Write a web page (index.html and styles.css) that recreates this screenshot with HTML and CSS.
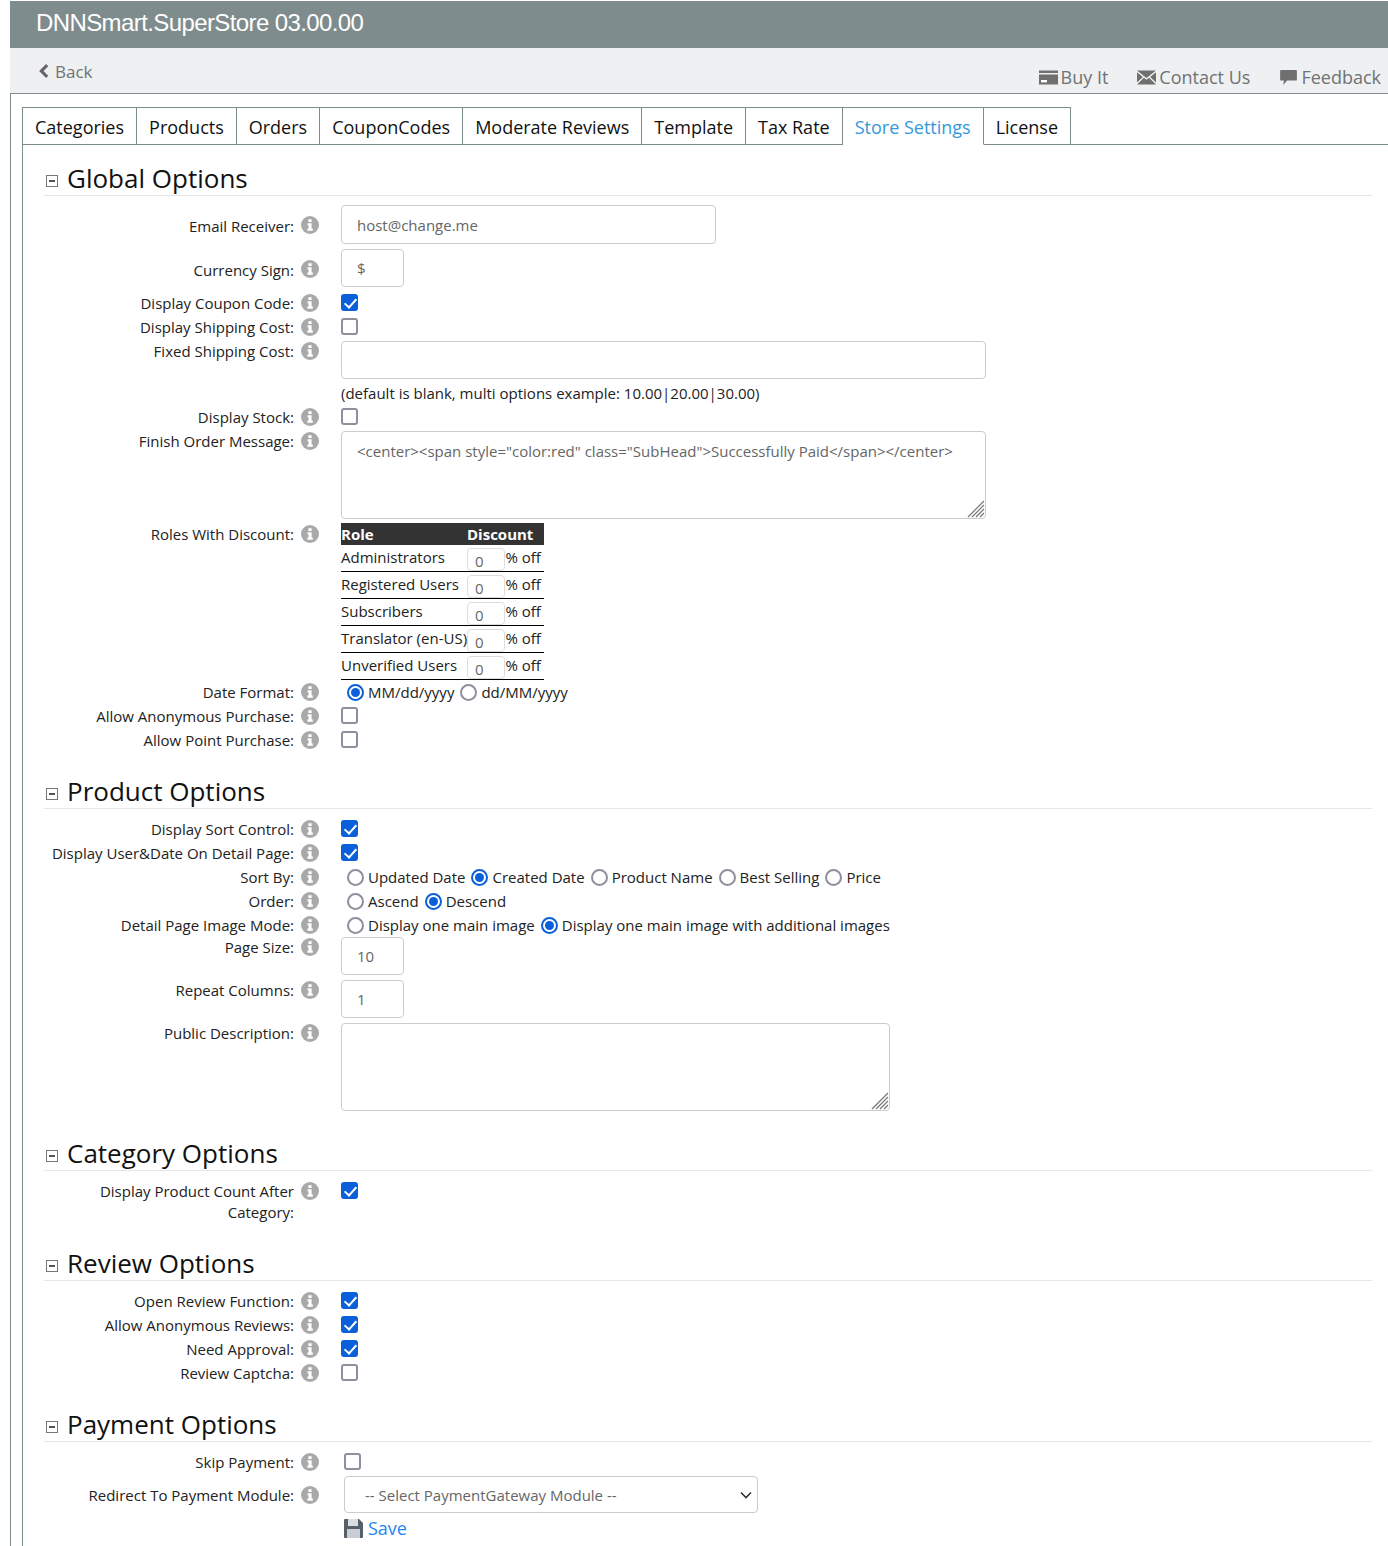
FILE: index.html
```html
<!DOCTYPE html>
<html lang="en">
<head>
<meta charset="utf-8">
<title>DNNSmart.SuperStore</title>
<link rel="stylesheet" href="styles.css">
</head>
<body>
<svg class="defs" width="0" height="0" aria-hidden="true">
  <symbol id="info" viewBox="0 0 18 18">
    <circle cx="9" cy="9" r="9" fill="#a9a9a9"/>
    <path d="M7.4 3.2h3.2v2.8H7.4zM6.6 7.2h4v5.4h1.2v2.2H6.4v-2.2h1.2V9.4h-1z" fill="#fff"/>
  </symbol>
  <symbol id="minus" viewBox="0 0 12 12">
    <rect x=".5" y=".5" width="11" height="11" fill="#fff" stroke="#777"/>
    <rect x="3" y="5" width="6" height="2" fill="#555"/>
  </symbol>
</svg>

<header class="title-bar">DNNSmart.SuperStore 03.00.00</header>
<nav class="sub-bar">
  <a class="back" href="#"><svg class="back-icon" viewBox="0 0 12 16"><path d="M8.6 1 10.8 3.2 6 8l4.8 4.8L8.6 15 1.6 8z" fill="#666"/></svg>Back</a>
  <div class="sub-links">
    <a href="#"><svg class="sub-icon" viewBox="0 0 19 14"><path d="M0 0h19v2.4H0zM0 4h19v10H0z" fill="#6f6f6f"/><rect x="2" y="9.5" width="6" height="2.4" fill="#fff"/></svg>Buy It</a>
    <a href="#"><svg class="sub-icon" viewBox="0 0 19 14"><path d="M0 0h19L9.500 7.500zM0 1.800 5.800 6.400 0 12zM19 1.800 13.200 6.400 19 12zM0 14 6.900 7.300 9.500 9.300 12.100 7.300 19 14z" fill="#6f6f6f"/></svg>Contact Us</a>
    <a href="#"><svg class="sub-icon" viewBox="0 0 19 17"><path d="M1 0h17a1 1 0 0 1 1 1v10a1 1 0 0 1-1 1H8l-4.500 5 .8-5H1a1 1 0 0 1-1-1V1a1 1 0 0 1 1-1z" fill="#6f6f6f"/></svg>Feedback</a>
  </div>
</nav>

<main class="panel">
  <ul class="tabs">
    <li>Categories</li><li>Products</li><li>Orders</li><li>CouponCodes</li><li>Moderate Reviews</li><li>Template</li><li>Tax Rate</li><li class="active">Store Settings</li><li>License</li>
  </ul>
  <div class="tab-body">

    <section class="section first">
      <h2><svg class="collapse"><use href="#minus"/></svg>Global Options</h2>
      <div class="rows">
        <div class="row field"><label class="mid">Email Receiver:</label><svg class="info mid"><use href="#info"/></svg><input class="text w-375" value="host@change.me"></div>
        <div class="row field-s"><label class="mid">Currency Sign:</label><svg class="info mid"><use href="#info"/></svg><input class="text w-63" value="$"></div>
        <div class="row"><label>Display Coupon Code:</label><svg class="info"><use href="#info"/></svg><input type="checkbox" class="check" checked></div>
        <div class="row"><label>Display Shipping Cost:</label><svg class="info"><use href="#info"/></svg><input type="checkbox" class="check"></div>
        <div class="row top-field"><label>Fixed Shipping Cost:</label><svg class="info"><use href="#info"/></svg>
          <div class="stack"><input class="text w-645"><p class="hint">(default is blank, multi options example: 10.00|20.00|30.00)</p></div></div>
        <div class="row"><label>Display Stock:</label><svg class="info"><use href="#info"/></svg><input type="checkbox" class="check"></div>
        <div class="row area-row"><label>Finish Order Message:</label><svg class="info"><use href="#info"/></svg>
          <div class="area w-645"><textarea>&lt;center&gt;&lt;span style="color:red" class="SubHead"&gt;Successfully Paid&lt;/span&gt;&lt;/center&gt;</textarea><svg class="grip" viewBox="0 0 18 18"><path d="M17 1 1 17M17 5 5 17M17 9 9 17M17 13 13 17" stroke="#777" stroke-width="1.200"/></svg></div></div>
        <div class="row roles-row"><label class="roles">Roles With Discount:</label><svg class="info roles"><use href="#info"/></svg>
          <table class="roles-table">
            <thead><tr><th class="c-role">Role</th><th colspan="2">Discount</th></tr></thead>
            <tbody>
              <tr><td>Administrators</td><td class="c-in"><input class="mini" value="0"></td><td class="c-off">% off</td></tr>
              <tr><td>Registered Users</td><td class="c-in"><input class="mini" value="0"></td><td class="c-off">% off</td></tr>
              <tr><td>Subscribers</td><td class="c-in"><input class="mini" value="0"></td><td class="c-off">% off</td></tr>
              <tr><td>Translator (en-US)</td><td class="c-in"><input class="mini" value="0"></td><td class="c-off">% off</td></tr>
              <tr><td>Unverified Users</td><td class="c-in"><input class="mini" value="0"></td><td class="c-off">% off</td></tr>
            </tbody>
          </table></div>
        <div class="row"><label>Date Format:</label><svg class="info"><use href="#info"/></svg>
          <div class="radios"><input type="radio" name="df" checked><span>MM/dd/yyyy</span><input type="radio" name="df"><span>dd/MM/yyyy</span></div></div>
        <div class="row"><label>Allow Anonymous Purchase:</label><svg class="info"><use href="#info"/></svg><input type="checkbox" class="check"></div>
        <div class="row"><label>Allow Point Purchase:</label><svg class="info"><use href="#info"/></svg><input type="checkbox" class="check"></div>
      </div>
    </section>

    <section class="section">
      <h2><svg class="collapse"><use href="#minus"/></svg>Product Options</h2>
      <div class="rows">
        <div class="row"><label>Display Sort Control:</label><svg class="info"><use href="#info"/></svg><input type="checkbox" class="check" checked></div>
        <div class="row"><label>Display User&amp;Date On Detail Page:</label><svg class="info"><use href="#info"/></svg><input type="checkbox" class="check" checked></div>
        <div class="row"><label>Sort By:</label><svg class="info"><use href="#info"/></svg>
          <div class="radios"><input type="radio" name="sb"><span>Updated Date</span><input type="radio" name="sb" checked><span>Created Date</span><input type="radio" name="sb"><span>Product Name</span><input type="radio" name="sb"><span>Best Selling</span><input type="radio" name="sb"><span>Price</span></div></div>
        <div class="row"><label>Order:</label><svg class="info"><use href="#info"/></svg>
          <div class="radios"><input type="radio" name="or"><span>Ascend</span><input type="radio" name="or" checked><span>Descend</span></div></div>
        <div class="row"><label>Detail Page Image Mode:</label><svg class="info"><use href="#info"/></svg>
          <div class="radios"><input type="radio" name="im"><span>Display one main image</span><input type="radio" name="im" checked><span>Display one main image with additional images</span></div></div>
        <div class="row top-field gap-5"><label>Page Size:</label><svg class="info"><use href="#info"/></svg><input class="text w-63" value="10"></div>
        <div class="row top-field gap-5"><label>Repeat Columns:</label><svg class="info"><use href="#info"/></svg><input class="text w-63" value="1"></div>
        <div class="row area-row gap-3"><label>Public Description:</label><svg class="info"><use href="#info"/></svg>
          <div class="area w-549"><textarea></textarea><svg class="grip" viewBox="0 0 18 18"><path d="M17 1 1 17M17 5 5 17M17 9 9 17M17 13 13 17" stroke="#777" stroke-width="1.200"/></svg></div></div>
      </div>
    </section>

    <section class="section">
      <h2><svg class="collapse"><use href="#minus"/></svg>Category Options</h2>
      <div class="rows">
        <div class="row two-line"><label>Display Product Count After Category:</label><svg class="info"><use href="#info"/></svg><input type="checkbox" class="check" checked></div>
      </div>
    </section>

    <section class="section">
      <h2><svg class="collapse"><use href="#minus"/></svg>Review Options</h2>
      <div class="rows">
        <div class="row"><label>Open Review Function:</label><svg class="info"><use href="#info"/></svg><input type="checkbox" class="check" checked></div>
        <div class="row"><label>Allow Anonymous Reviews:</label><svg class="info"><use href="#info"/></svg><input type="checkbox" class="check" checked></div>
        <div class="row"><label>Need Approval:</label><svg class="info"><use href="#info"/></svg><input type="checkbox" class="check" checked></div>
        <div class="row"><label>Review Captcha:</label><svg class="info"><use href="#info"/></svg><input type="checkbox" class="check"></div>
      </div>
    </section>

    <section class="section last">
      <h2><svg class="collapse"><use href="#minus"/></svg>Payment Options</h2>
      <div class="rows">
        <div class="row shift"><label>Skip Payment:</label><svg class="info"><use href="#info"/></svg><input type="checkbox" class="check"></div>
        <div class="row shift select-row"><label class="mid">Redirect To Payment Module:</label><svg class="info mid"><use href="#info"/></svg>
          <div class="select-wrap"><select><option>-- Select PaymentGateway Module --</option></select><svg class="chev" viewBox="0 0 12 8"><path d="M1 1.500 6 6.500 11 1.500" fill="none" stroke="#333" stroke-width="1.600"/></svg></div></div>
        <a class="save" href="#"><svg class="save-icon" viewBox="0 0 19 19"><path d="M0 1a1 1 0 0 1 1-1h14l4 4v14a1 1 0 0 1-1 1H1a1 1 0 0 1-1-1z" fill="#56606a"/><rect x="4" y="0" width="10" height="7" fill="#d9dde0"/><rect x="3" y="10" width="13" height="9" fill="#c8ced3"/></svg>Save</a>
      </div>
    </section>

  </div>
</main>
</body>
</html>
```

FILE: styles.css
```css
* { box-sizing: border-box; }
html, body { height: 100%; }
body {
  margin: 0;
  padding: 1px 0 0 10px;
  display: flex;
  flex-direction: column;
  overflow: hidden;
  background: #fff;
  font-family: "Open Sans", "Liberation Sans", sans-serif;
  font-size: 15px;
  color: #222;
}
.defs { position: absolute; }
a { text-decoration: none; color: inherit; }

.title-bar {
  height: 47px;
  padding: 8px 0 0 26px;
  background: #7f8c8d;
  color: #fff;
  font-family: "Liberation Sans", Arial, sans-serif;
  font-size: 24px;
  line-height: 28px;
  letter-spacing: -0.6px;
}
.sub-bar {
  height: 46px;
  display: flex;
  justify-content: space-between;
  background: #eff0f2;
  border-bottom: 1px solid #7f8c8d;
  color: #6e7375;
  font-size: 18px;
}
.back {
  display: flex;
  align-items: center;
  gap: 5px;
  margin: 11px 0 0 27px;
  height: 25px;
  font-size: 17px;
}
.back-icon { width: 13px; height: 16px; margin-bottom: 2px; }
.sub-links {
  display: flex;
  gap: 29px;
  padding: 16px 7px 0 0;
}
.sub-links a { display: flex; align-items: center; gap: 3px; height: 26px; }
.sub-icon { width: 19px; height: 15px; }

.panel {
  flex: 1;
  display: flex;
  flex-direction: column;
  padding: 13px 0 0 11px;
  border-left: 1px solid #7f8c8d;
}
.tabs {
  display: flex;
  margin: 0;
  padding: 0;
  list-style: none;
  height: 38px;
  font-size: 18px;
  color: #111;
}
.tabs li {
  height: 38px;
  padding: 0 12px;
  line-height: 38px;
  border: 1px solid #7f8c8d;
  border-left: 0;
  background: #fff;
}
.tabs li:first-child { border-left: 1px solid #7f8c8d; }
.tabs li.active { color: #3498db; border-bottom-color: #fff; position: relative; z-index: 1; }
.tab-body {
  flex: 1;
  margin-top: -1px;
  padding: 0 16px 0 21px;
  border-top: 1px solid #7f8c8d;
  border-left: 1px solid #7f8c8d;
}

.section { margin-top: 22px; }
.section.first { margin-top: 16px; }
h2 {
  display: flex;
  align-items: center;
  height: 35px;
  margin: 0;
  padding-left: 2px;
  border-bottom: 1px solid #e6e6e6;
  font-size: 26px;
  font-weight: 400;
  line-height: 34px;
  color: #111;
}
.collapse { width: 12px; height: 12px; margin: 6px 9px 0 0; }
.rows { padding-top: 8px; }

.row { display: flex; align-items: flex-start; min-height: 24px; }
.row label {
  width: 250px;
  flex: none;
  text-align: right;
  line-height: 21px;
  padding-top: 2px;
}
.info { width: 18px; height: 18px; flex: none; margin: 3px 22px 0 7px; }
label.mid { padding-top: 11px; }
.info.mid { margin-top: 11px; }

.field { height: 44px; margin-top: 1px; }
.field-s { height: 42px; }
.top-field { padding-top: 2px; }
.gap-5 { height: 43px; padding-top: 0; }
.gap-5 label { padding-top: 0; }
.gap-5 .info { margin-top: 1px; }
.top-field:not(.gap-5) label { padding-top: 0; }
.top-field:not(.gap-5) .info { margin-top: 1px; }

.text {
  height: 39px;
  padding: 0 15px;
  border: 1px solid #ccc;
  border-radius: 4px;
  font: inherit;
  color: #666;
  background: #fff;
}
.w-375 { width: 375px; }
.w-63 { width: 63px; height: 38px; }
.w-645 { width: 645px; }
.w-549 { width: 549px; }
.stack { display: flex; flex-direction: column; }
.stack .text { height: 38px; }
.hint { margin: 0; padding-top: 2px; line-height: 24px; height: 26px; font-size: 15px; }

.check, .radios input {
  appearance: none;
  flex: none;
  position: relative;
  margin: 0;
  background: #fff;
}
.check {
  width: 17px;
  height: 17px;
  margin-top: 3px;
  border: 2px solid #8f8f9d;
  border-radius: 3px;
}
.check:checked { background: #0b5fd9; border-color: #0b5fd9; }
.check:checked::after {
  content: "";
  position: absolute;
  left: 4px;
  top: 0;
  width: 5px;
  height: 10px;
  border: solid #fff;
  border-width: 0 2.500px 2.500px 0;
  transform: rotate(42deg);
}
.area-row { padding-top: 2px; }
.area-row label { padding-top: 0; }
.area-row .info { margin-top: 1px; }
.area { position: relative; height: 88px; }
.area textarea {
  display: block;
  width: 100%;
  height: 100%;
  padding: 9px 15px;
  border: 1px solid #ccc;
  border-radius: 4px;
  font: inherit;
  color: #666;
  resize: none;
  background: #fff;
}
.grip { position: absolute; right: 1px; bottom: 1px; width: 18px; height: 18px; }

.roles-row { padding-top: 4px; }
label.roles { padding-top: 1px; }
.info.roles { margin-top: 2px; }
.roles-table {
  width: 203px;
  border-collapse: collapse;
  table-layout: fixed;
}
.roles-table th {
  height: 22px;
  padding: 0;
  background: #333;
  color: #fff;
  font-size: 15px;
  font-weight: 700;
  text-align: left;
  line-height: 22px;
}
.c-role { width: 126px; }
.roles-table td {
  height: 26px;
  padding: 0;
  border-bottom: 1px solid #000;
  white-space: nowrap;
  vertical-align: top;
  line-height: 24px;
}
.c-in { width: 42px; }
.c-off { width: 35px; }
.mini {
  display: block;
  width: 38px;
  height: 23px;
  margin-top: 3px;
  padding: 2px 0 0 7px;
  border: 1px solid #ddd;
  border-radius: 4px;
  font: inherit;
  color: #666;
}

.radios { display: flex; align-items: center; height: 24px; }
.radios input {
  width: 17px;
  height: 17px;
  margin: 0 4px 0 6px;
  border: 2px solid #8f8f9d;
  border-radius: 50%;
}
.radios input:checked { border-color: #0b5fd9; }
.radios input:checked::after {
  content: "";
  position: absolute;
  inset: 2px;
  border-radius: 50%;
  background: #0b5fd9;
}
.gap-3 { padding-top: 0; height: 91px; }

.two-line { height: 45px; }
.shift .info { margin-right: 25px; }
.select-row { height: 37px; margin-top: 2px; }
.select-row label.mid { padding-top: 9px; }
.select-row .info.mid { margin-top: 10px; }
.select-wrap { position: relative; width: 414px; }
.select-wrap select {
  display: block;
  width: 100%;
  height: 37px;
  padding: 0 20px;
  border: 1px solid #ccc;
  border-radius: 4px;
  appearance: none;
  font: inherit;
  color: #666;
  background: #fff;
}
.chev { position: absolute; right: 6px; top: 15px; width: 12px; height: 8px; }
.save {
  display: flex;
  align-items: center;
  gap: 5px;
  margin: 3px 0 0 300px;
  height: 24px;
  font-size: 18px;
  color: #1e87f0;
}
.save-icon { width: 19px; height: 19px; }
```
